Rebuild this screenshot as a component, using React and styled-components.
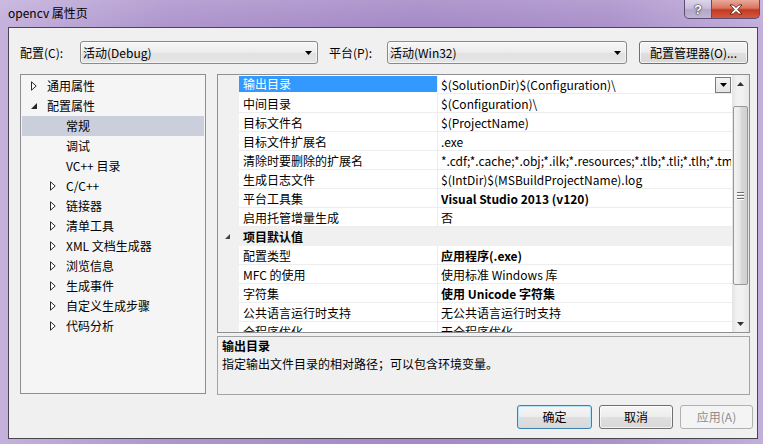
import React from 'react';
import styled, { createGlobalStyle, css } from 'styled-components';

const FONT = `"Noto Sans CJK SC", "Microsoft YaHei", "Noto Sans", sans-serif`;

const Global = createGlobalStyle`
  html, body { margin: 0; padding: 0; width: 763px; height: 444px; overflow: hidden; }
  body { font-family: ${FONT}; font-size: 12px; color: #000; }
  * { box-sizing: border-box; }
`;

const Window = styled.div`
  width: 763px;
  height: 444px;
  display: flex;
  flex-direction: column;
  background:
    linear-gradient(180deg, rgba(255,255,255,0.12) 0px, rgba(255,255,255,0) 26px),
    linear-gradient(90deg, #c4b1dc 0%, #ae96cd 22%, #a58ac6 55%, #ab92cb 80%, #c2afdc 100%);
`;

const TitleBar = styled.div`
  height: 27px;
  flex: none;
  display: flex;
  align-items: flex-start;
  padding-left: 8px;
`;

const Title = styled.span`
  margin-top: 5px;
  line-height: 16px;
  font-size: 12px;
  color: #000;
`;

const Caption = styled.div`
  margin-left: auto;
  margin-right: 3px;
  display: flex;
  height: 19px;
`;

const CapBtn = styled.div`
  width: ${p => p.$w}px;
  height: 19px;
  border: 1px solid #5e4d72;
  border-top: none;
  display: flex;
  align-items: center;
  justify-content: center;
  ${p => p.$close ? css`
    border-left: none;
    border-bottom-right-radius: 5px;
    background: linear-gradient(180deg, #e9a99b 0%, #d9755f 45%, #c4391f 55%, #d25a42 100%);
  ` : css`
    border-bottom-left-radius: 5px;
    background: linear-gradient(180deg, #ddd5e8 0%, #c9bedb 45%, #b3a6c8 55%, #c2b6d4 100%);
  `}
`;

const HelpGlyph = styled.span`
  font-family: "Liberation Sans", sans-serif;
  font-weight: 700;
  font-size: 13px;
  line-height: 13px;
  color: #fff;
  text-shadow: 0 0 1px #3a2f4a, 0 0 1px #3a2f4a, 0 0 2px #3a2f4a;
`;

const Client = styled.div`
  flex: 1;
  margin: 0 5px 5px 8px;
  background: #f0f0f0;
  border: 1px solid #4a4650;
  padding: 13px 0 0 11px;
  display: flex;
  flex-direction: column;
`;

const ConfigRow = styled.div`
  height: 23px;
  display: flex;
  align-items: center;
`;

const Label = styled.span`
  width: ${p => p.$w}px;
  margin-left: ${p => p.$ml || 0}px;
  flex: none;
  line-height: 16px;
`;

const Combo = styled.div`
  width: ${p => p.$w}px;
  height: 23px;
  flex: none;
  border: 1px solid #8a8a8a;
  border-radius: 3px;
  background: linear-gradient(180deg, #f7f7f7 0%, #ececec 50%, #e1e1e1 51%, #e6e6e6 100%);
  box-shadow: inset 0 0 0 1px rgba(255,255,255,0.6);
  display: flex;
  align-items: center;
  padding: 0 5px 0 2px;
  line-height: 16px;
`;

const ComboText = styled.span`
  flex: 1;
`;

const DownTri = ({ w = 7, h = 4, color = '#000' }) => (
  <svg width={w} height={h} viewBox={`0 0 ${w} ${h}`} style={{ display: 'block' }}>
    <path d={`M0 0 L${w} 0 L${w / 2} ${h} Z`} fill={color} />
  </svg>
);

const UpTri = ({ w = 7, h = 4, color = '#000' }) => (
  <svg width={w} height={h} viewBox={`0 0 ${w} ${h}`} style={{ display: 'block' }}>
    <path d={`M0 ${h} L${w} ${h} L${w / 2} 0 Z`} fill={color} />
  </svg>
);

const Button = styled.div`
  width: ${p => p.$w}px;
  height: ${p => p.$h || 24}px;
  margin-left: ${p => p.$ml || 0}px;
  flex: none;
  border: 1px solid #707070;
  border-radius: 3px;
  background: linear-gradient(180deg, #f6f6f6 0%, #ececec 50%, #dfdfdf 51%, #d8d8d8 100%);
  box-shadow: inset 0 0 0 1px rgba(255,255,255,0.7);
  display: flex;
  align-items: center;
  justify-content: center;
  line-height: 16px;
  color: #000;
  ${p => p.$default && css`
    border-color: #3c7fb1;
    box-shadow: inset 0 0 0 1px #b9e4f8;
  `}
  ${p => p.$disabled && css`
    border-color: #adb2b5;
    background: #f4f4f4;
    box-shadow: none;
    color: #8d8d8d;
  `}
`;

const Main = styled.div`
  margin-top: 10px;
  width: 730px;
  display: flex;
  gap: 11px;
`;

const Tree = styled.div`
  width: 186px;
  height: 320px;
  flex: none;
  border: 1px solid #8e8f93;
  background: #f5f5f5;
  padding: 1px 1px 0 1px;
`;

const TreeRow = styled.div`
  height: 20px;
  display: flex;
  align-items: center;
  padding-left: ${p => 9 + p.$level * 19}px;
  background: ${p => (p.$selected ? '#cbcfdb' : 'transparent')};
  line-height: 16px;
  white-space: nowrap;
`;

const Expander = styled.span`
  width: 16px;
  flex: none;
  display: flex;
  align-items: center;
`;

const Collapsed = () => (
  <svg width="6" height="10" viewBox="0 0 6 10" style={{ display: 'block' }}>
    <path d="M0.5 0.8 L5.2 5 L0.5 9.2 Z" fill="#fff" stroke="#2a2a2a" strokeWidth="1" />
  </svg>
);

const Expanded = ({ size = 6, color = '#262626' }) => (
  <svg width={size} height={size} viewBox={`0 0 ${size} ${size}`} style={{ display: 'block' }}>
    <path d={`M${size} 0 L${size} ${size} L0 ${size} Z`} fill={color} />
  </svg>
);

const RightCol = styled.div`
  width: 533px;
  flex: none;
  display: flex;
  flex-direction: column;
  gap: 3px;
`;

const Grid = styled.div`
  height: 259px;
  border: 1px solid #8e8f93;
  background: #fff;
  display: flex;
  overflow: hidden;
`;

const GridBody = styled.div`
  flex: 1;
  overflow: hidden;
  position: relative;
`;

const PropRow = styled.div`
  height: 19px;
  display: grid;
  grid-template-columns: 21px 198px 1fr;
  line-height: 16px;
  background: ${p => (p.$category ? '#f0f0f0' : '#fff')};
`;

const Gutter = styled.div`
  background: #f0f0f0;
  display: flex;
  align-items: center;
  padding-left: 7px;
`;

const NameCell = styled.div`
  border-bottom: 1px solid #ededed;
  padding: 1px 4px 0 4px;
  white-space: nowrap;
  overflow: hidden;
  display: flex;
  align-items: center;
  ${p => p.$selected && css`
    background: #3399ff;
    color: #fff;
    border-top: 1px solid #fff;
    border-bottom: 2px solid #fff;
    padding-top: 0;
  `}
  ${p => p.$category && css`
    font-weight: 700;
    background: #f0f0f0;
    border-bottom-color: #f0f0f0;
  `}
`;

const ValueCell = styled.div`
  border-left: 1px solid #ededed;
  border-bottom: 1px solid #ededed;
  padding: 1px 1px 0 3px;
  white-space: nowrap;
  overflow: hidden;
  display: flex;
  align-items: center;
  font-weight: ${p => (p.$bold ? 700 : 400)};
  ${p => p.$category && css`
    background: #f0f0f0;
    border-color: #f0f0f0;
  `}
`;

const ValueText = styled.span`
  flex: 1;
  overflow: hidden;
`;

const DropBtn = styled.div`
  width: 16px;
  height: 16px;
  flex: none;
  margin-left: 2px;
  border: 1px solid #7a7a7a;
  background: linear-gradient(180deg, #f4f4f4, #e4e4e4);
  display: flex;
  align-items: center;
  justify-content: center;
`;

const ScrollBar = styled.div`
  width: 17px;
  flex: none;
  display: flex;
  flex-direction: column;
  background: linear-gradient(90deg, #e3e3e3 0%, #f2f2f2 30%, #f0f0f0 70%, #e6e6e6 100%);
`;

const ScrollArrow = styled.div`
  height: 17px;
  flex: none;
  display: flex;
  align-items: center;
  justify-content: center;
`;

const Thumb = styled.div`
  margin: 14px 1px 0 1px;
  height: 179px;
  flex: none;
  border: 1px solid #979797;
  border-radius: 2px;
  background: linear-gradient(90deg, #f3f3f3 0%, #e8e8e8 45%, #d8d8d8 55%, #d0d0d0 100%);
  display: flex;
  flex-direction: column;
  align-items: center;
  justify-content: center;
  gap: 1px;
`;

const GripLine = styled.div`
  width: 7px;
  height: 1px;
  background: #6e6e6e;
  box-shadow: 0 1px 0 #fff;
  margin-bottom: 1px;
`;

const Spacer = styled.div`
  flex: 1;
`;

const Desc = styled.div`
  height: 59px;
  border: 1px solid #a3a3a3;
  background: #f0f0f0;
  padding: 0 4px;
  line-height: 18px;
`;

const DescTitle = styled.div`
  font-weight: 700;
`;

const Footer = styled.div`
  margin-top: 10px;
  padding-right: 4px;
  display: flex;
  justify-content: flex-end;
`;

const treeItems = [
  { label: '通用属性', level: 0, arrow: 'c' },
  { label: '配置属性', level: 0, arrow: 'e' },
  { label: '常规', level: 1, selected: true },
  { label: '调试', level: 1 },
  { label: 'VC++ 目录', level: 1 },
  { label: 'C/C++', level: 1, arrow: 'c' },
  { label: '链接器', level: 1, arrow: 'c' },
  { label: '清单工具', level: 1, arrow: 'c' },
  { label: 'XML 文档生成器', level: 1, arrow: 'c' },
  { label: '浏览信息', level: 1, arrow: 'c' },
  { label: '生成事件', level: 1, arrow: 'c' },
  { label: '自定义生成步骤', level: 1, arrow: 'c' },
  { label: '代码分析', level: 1, arrow: 'c' },
];

const props = [
  { name: '输出目录', value: '$(SolutionDir)$(Configuration)\\', selected: true },
  { name: '中间目录', value: '$(Configuration)\\' },
  { name: '目标文件名', value: '$(ProjectName)' },
  { name: '目标文件扩展名', value: '.exe' },
  { name: '清除时要删除的扩展名', value: '*.cdf;*.cache;*.obj;*.ilk;*.resources;*.tlb;*.tli;*.tlh;*.tmp;*.rsp;*.pgc;*.pgd;*.meta;*.tlog;*.manifest;*.res;*.pch;*.exp;*.idb;*.rep;*.xdc;*.pdb' },
  { name: '生成日志文件', value: '$(IntDir)$(MSBuildProjectName).log' },
  { name: '平台工具集', value: 'Visual Studio 2013 (v120)', bold: true },
  { name: '启用托管增量生成', value: '否' },
  { category: '项目默认值' },
  { name: '配置类型', value: '应用程序(.exe)', bold: true },
  { name: 'MFC 的使用', value: '使用标准 Windows 库' },
  { name: '字符集', value: '使用 Unicode 字符集', bold: true },
  { name: '公共语言运行时支持', value: '无公共语言运行时支持' },
  { name: '全程序优化', value: '无全程序优化' },
];

export default function App() {
  return (
    <>
      <Global />
      <Window>
        <TitleBar>
          <Title>opencv 属性页</Title>
          <Caption>
            <CapBtn $w={28}><HelpGlyph>?</HelpGlyph></CapBtn>
            <CapBtn $w={48} $close>
              <svg width="14" height="11" viewBox="0 0 14 11">
                <path d="M1 1 L4.5 1 L7 3.6 L9.5 1 L13 1 L8.8 5.5 L13 10 L9.5 10 L7 7.4 L4.5 10 L1 10 L5.2 5.5 Z" fill="#fff" stroke="#5a1e14" strokeWidth="0.9" strokeLinejoin="round" />
              </svg>
            </CapBtn>
          </Caption>
        </TitleBar>
        <Client>
          <ConfigRow>
            <Label $w={60}>配置(C):</Label>
            <Combo $w={238}><ComboText>活动(Debug)</ComboText><DownTri /></Combo>
            <Label $w={58} $ml={11}>平台(P):</Label>
            <Combo $w={240}><ComboText>活动(Win32)</ComboText><DownTri /></Combo>
            <Button $w={109} $h={23} $ml={12}>配置管理器(O)...</Button>
          </ConfigRow>
          <Main>
            <Tree>
              {treeItems.map((t, i) => (
                <TreeRow key={i} $level={t.level} $selected={t.selected}>
                  <Expander>
                    {t.arrow === 'c' && <Collapsed />}
                    {t.arrow === 'e' && <Expanded />}
                  </Expander>
                  {t.label}
                </TreeRow>
              ))}
            </Tree>
            <RightCol>
              <Grid>
                <GridBody>
                  {props.map((p, i) =>
                    p.category ? (
                      <PropRow key={i} $category>
                        <Gutter><Expanded size={5} color="#444" /></Gutter>
                        <NameCell $category>{p.category}</NameCell>
                        <ValueCell $category />
                      </PropRow>
                    ) : (
                      <PropRow key={i}>
                        <Gutter />
                        <NameCell $selected={p.selected}>{p.name}</NameCell>
                        <ValueCell $bold={p.bold}>
                          <ValueText>{p.value}</ValueText>
                          {p.selected && <DropBtn><DownTri w={7} h={4} /></DropBtn>}
                        </ValueCell>
                      </PropRow>
                    )
                  )}
                </GridBody>
                <ScrollBar>
                  <ScrollArrow><UpTri w={7} h={4} color="#333" /></ScrollArrow>
                  <Thumb>
                    <GripLine />
                    <GripLine />
                    <GripLine />
                  </Thumb>
                  <Spacer />
                  <ScrollArrow><DownTri w={7} h={4} color="#333" /></ScrollArrow>
                </ScrollBar>
              </Grid>
              <Desc>
                <DescTitle>输出目录</DescTitle>
                <div>指定输出文件目录的相对路径；可以包含环境变量。</div>
              </Desc>
            </RightCol>
          </Main>
          <Footer>
            <Button $w={75} $default>确定</Button>
            <Button $w={74} $ml={7}>取消</Button>
            <Button $w={73} $ml={7} $disabled>应用(A)</Button>
          </Footer>
        </Client>
      </Window>
    </>
  );
}
